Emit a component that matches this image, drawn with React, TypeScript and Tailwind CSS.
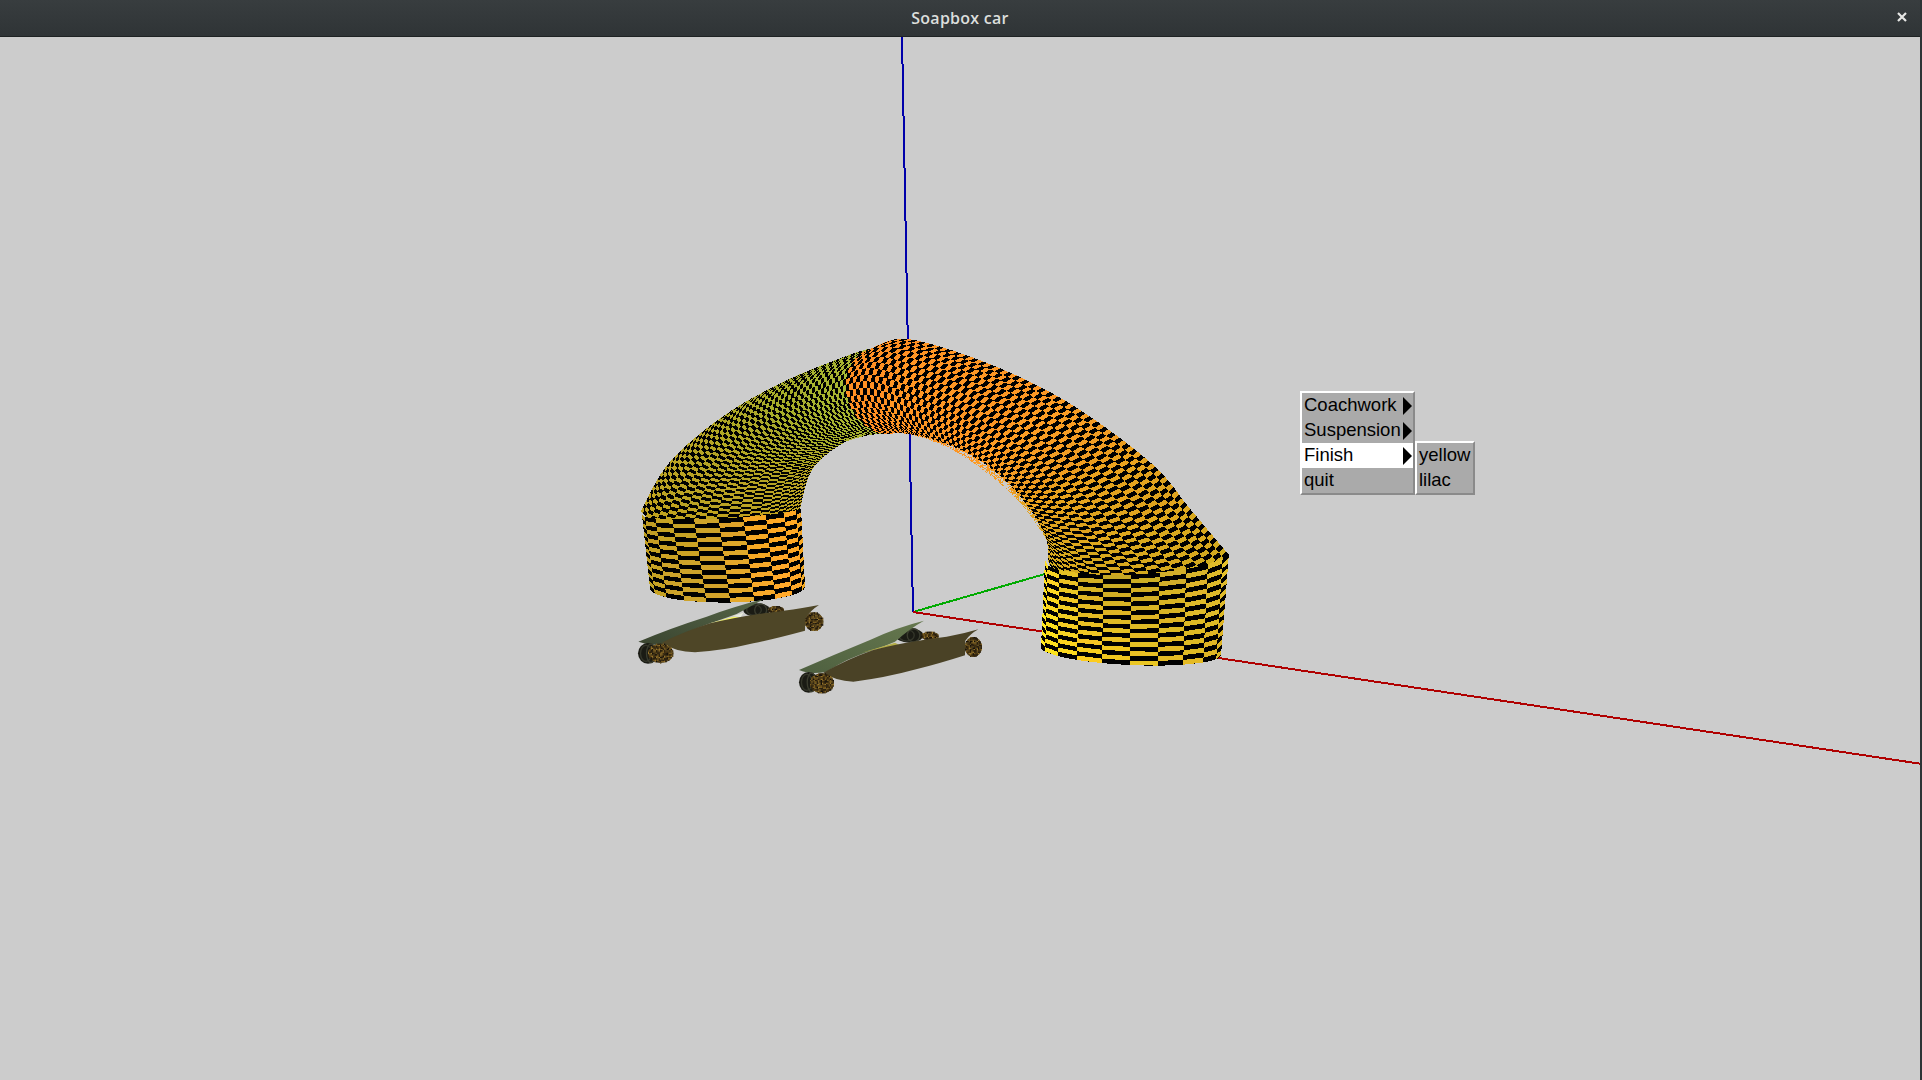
type Pt = [number, number];

// ---- small geometry helpers for the 3D scene ----
const lerp = (a: number, b: number, t: number) => a + (b - a) * t;
const mix = (a: Pt, b: Pt, t: number): Pt => [lerp(a[0], b[0], t), lerp(a[1], b[1], t)];

// dense catmull-rom polyline, resampled by arc length
const curve = (pts: Pt[]) => {
  const dense: Pt[] = [];
  for (let i = 0; i < pts.length - 1; i++) {
    const p0 = pts[Math.max(i - 1, 0)];
    const p1 = pts[i];
    const p2 = pts[i + 1];
    const p3 = pts[Math.min(i + 2, pts.length - 1)];
    for (let k = 0; k < 30; k++) {
      const t = k / 30;
      const f = (n: 0 | 1) =>
        0.5 *
        (2 * p1[n] +
          (p2[n] - p0[n]) * t +
          (2 * p0[n] - 5 * p1[n] + 4 * p2[n] - p3[n]) * t * t +
          (3 * p1[n] - p0[n] - 3 * p2[n] + p3[n]) * t * t * t);
      dense.push([f(0), f(1)]);
    }
  }
  dense.push(pts[pts.length - 1]);
  const len = [0];
  for (let i = 1; i < dense.length; i++) {
    len.push(len[i - 1] + Math.hypot(dense[i][0] - dense[i - 1][0], dense[i][1] - dense[i - 1][1]));
  }
  const total = len[len.length - 1];
  return (t: number): Pt => {
    const d = t * total;
    let i = 1;
    while (i < len.length - 1 && len[i] < d) i++;
    const s = (d - len[i - 1]) / (len[i] - len[i - 1] || 1);
    return mix(dense[i - 1], dense[i], s);
  };
};

const hex = (c: string) => [1, 3, 5].map((i) => parseInt(c.slice(i, i + 2), 16));
const rampRgb = (stops: string[], t: number) => {
  const p = Math.min(Math.max(t, 0), 0.9999) * (stops.length - 1);
  const i = Math.floor(p);
  const a = hex(stops[i]);
  const b = hex(stops[i + 1]);
  return a.map((v, n) => lerp(v, b[n], p - i));
};
const toColor = (c: number[]) => `rgb(${c.map((v) => Math.min(255, Math.round(v / 6) * 6)).join(",")})`;

const outline = (pts: Pt[]) => `M${pts.map((p) => `${p[0].toFixed(1)} ${p[1].toFixed(1)}`).join("L")}Z`;

type Cells = Record<string, string>;
const add = (cells: Cells, color: string, d: string) => {
  cells[color] = (cells[color] || "") + d;
};

// one half of the arch, u runs from start to end of the two edge curves
const tubeHalf = (
  outer: Pt[],
  inner: Pt[],
  nu: number,
  nv: number,
  bulge: (u: number) => Pt,
  stops: string[]
) => {
  const o = curve(outer);
  const n = curve(inner);
  const at = (u: number, v: number): Pt => {
    const s = lerp((1 - Math.cos(Math.PI * v)) / 2, v, 0.25);
    const p = mix(o(u), n(u), s);
    const b = bulge(u);
    const w = Math.sin(Math.PI * v);
    return [p[0] + b[0] * w, p[1] + b[1] * w];
  };
  const cells: Cells = {};
  const edge: Pt[] = [];
  for (let i = 0; i <= nu; i++) edge.push(o(i / nu));
  for (let j = 1; j < nv; j++) edge.push(at(1, j / nv));
  for (let i = nu; i >= 0; i--) edge.push(n(i / nu));
  for (let j = nv - 1; j > 0; j--) edge.push(at(0, j / nv));
  for (let i = 0; i < nu; i++) {
    for (let j = 0; j < nv; j++) {
      if ((i + j) % 2) continue;
      add(
        cells,
        toColor(rampRgb(stops, (i + 0.5) / nu)),
        outline([at(i / nu, j / nv), at((i + 1) / nu, j / nv), at((i + 1) / nu, (j + 1) / nv), at(i / nu, (j + 1) / nv)])
      );
    }
  }
  return { cells, base: outline(edge) };
};

type Rim = { l: Pt; r: Pt; b: Pt };
const cylinder = (top: Rim, bottom: Rim, cols: number, rows: number, stopsTop: string[], stopsBottom: string[]) => {
  const ring = (r: Rim, a: number): Pt => {
    const c = mix(r.l, r.r, 0.5);
    const k = -Math.cos(a);
    const s = Math.sin(a);
    return [c[0] + ((r.r[0] - r.l[0]) / 2) * k + r.b[0] * s, c[1] + ((r.r[1] - r.l[1]) / 2) * k + r.b[1] * s];
  };
  const at = (i: number, j: number) => mix(ring(top, (i / cols) * Math.PI), ring(bottom, (i / cols) * Math.PI), j / rows);
  const cells: Cells = {};
  const edge: Pt[] = [];
  for (let i = 0; i <= cols * 4; i++) edge.push(at(i / 4, 0));
  for (let i = cols * 4; i >= 0; i--) edge.push(at(i / 4, rows));
  for (let i = 0; i < cols; i++) {
    for (let j = 0; j < rows; j++) {
      if ((i + j) % 2) continue;
      const t = (i + 0.5) / cols;
      const a = rampRgb(stopsTop, t);
      const b = rampRgb(stopsBottom, t);
      add(cells, toColor(a.map((v, n) => lerp(v, b[n], j / rows))), outline([at(i, j), at(i + 1, j), at(i + 1, j + 1), at(i, j + 1)]));
    }
  }
  return { cells, base: outline(edge) };
};

const leftArch = tubeHalf(
  [[641, 511], [669, 463], [722, 417], [783, 382], [849, 355], [873, 348]],
  [[800, 509], [812, 470], [840, 445], [865, 436], [883, 434]],
  72,
  20,
  (u) => (u < 0.5 ? [lerp(-6, -22, u * 2), lerp(18, 12, u * 2)] : [lerp(-22, -32, u * 2 - 1), lerp(12, 0, u * 2 - 1)]),
  ["#c0a020", "#b4a424", "#a8ac2a", "#a8b834"]
);
const rightArch = tubeHalf(
  [[873, 348], [908, 339], [987, 363], [1069, 403], [1151, 463], [1191, 510], [1229, 555]],
  [[883, 434], [914, 435], [967, 453], [1012, 487], [1044, 533], [1048, 561]],
  94,
  20,
  (u) => (u < 0.5 ? [lerp(-32, -30, u * 2), lerp(0, 16, u * 2)] : [lerp(-30, -8, u * 2 - 1), lerp(16, 28, u * 2 - 1)]),
  ["#ff9224", "#ff9424", "#fa9a22", "#e2a220", "#d2ac20"]
);
const leftLeg = cylinder(
  { l: [642, 515], r: [801, 508], b: [-3, 7] },
  { l: [650, 589], r: [805, 586], b: [3, 15] },
  10,
  18,
  ["#b89a20", "#c09c20", "#c8a026", "#c8a426", "#d2a428", "#f2a626", "#ffa826", "#ffa826", "#f0a424"],
  ["#c0a020", "#c8a424", "#cca428", "#cca428", "#d8a428", "#f4a828", "#ffaa28", "#ffa828", "#e8a424"]
);
const rightLeg = cylinder(
  { l: [1045, 560], r: [1229, 553], b: [-6, 18] },
  { l: [1041, 647], r: [1221, 655], b: [-1, 14] },
  10,
  20,
  ["#ffe820", "#ffd820", "#ecc424", "#d4ae24", "#c8a824", "#ccaa24", "#d4b028", "#dcb82a", "#e0bc2a", "#e6c22a"],
  ["#fff020", "#ffe820", "#ffdc20", "#ffd020", "#f8cc20", "#eec424", "#e6bc24", "#e0b824", "#dcb424", "#d8b024"]
);

const Surface = ({ part }: { part: { cells: Cells; base: string } }) => (
  <g shapeRendering="crispEdges">
    <path d={part.base} fill="#000000" />
    {Object.entries(part.cells).map(([c, d]) => (
      <path key={c} d={d} fill={c} />
    ))}
  </g>
);

// speckled wheel tread, coordinates in the 3x car space
const speckle = (cx: number, cy: number, rx: number, ry: number, seed: number) => {
  const colors = ["#7a5c20", "#94742c", "#4e3a14", "#2a2010", "#5e4c22", "#14100a", "#3a2c12"];
  let s = seed;
  const rnd = () => {
    s = (s * 16807) % 2147483647;
    return s / 2147483647;
  };
  const out: { x: number; y: number; c: string }[] = [];
  for (let y = -ry; y < ry; y += 4) {
    for (let x = -rx; x < rx; x += 4) {
      if (((x + 2) * (x + 2)) / (rx * rx) + ((y + 2) * (y + 2)) / (ry * ry) > 1) continue;
      out.push({ x: cx + x, y: cy + y, c: colors[Math.floor(rnd() * colors.length)] });
    }
  }
  return out;
};

const Tread = ({ cx, cy, rx, ry, seed }: { cx: number; cy: number; rx: number; ry: number; seed: number }) => (
  <g>
    <ellipse cx={cx} cy={cy} rx={rx} ry={ry} fill="#3a2c12" />
    {speckle(cx, cy, rx, ry, seed).map((r, i) => (
      <rect key={i} x={r.x} y={r.y} width={4} height={4} fill={r.c} />
    ))}
  </g>
);

const Tyre = ({ cx, cy, rx, ry }: { cx: number; cy: number; rx: number; ry: number }) => (
  <g>
    <ellipse cx={cx} cy={cy} rx={rx} ry={ry} fill="#1a1b14" />
    <ellipse cx={cx - rx * 0.2} cy={cy} rx={rx * 0.55} ry={ry * 0.78} fill="none" stroke="#34362a" strokeWidth={4} />
    <ellipse cx={cx + rx * 0.3} cy={cy} rx={rx * 0.45} ry={ry * 0.9} fill="none" stroke="#3a3c2e" strokeWidth={4} />
  </g>
);

const Cars = () => (
  <g transform="translate(620 590) scale(0.33333)">
    {/* near car */}
    <Tyre cx={410} cy={60} rx={40} ry={20} />
    <Tread cx={468} cy={60} rx={24} ry={12} seed={71} />
    <path d="M55 155 Q 150 115 260 80 Q 340 50 432 27 Q 390 50 350 72 Q 300 90 270 100 Q 190 130 130 162 Q 90 168 55 155Z" fill="url(#wingNear)" />
    <polygon points="270,100 340,80 362,82 300,95" fill="#f4f46a" />
    <polygon points="340,78 370,68 362,82" fill="#e8ecdc" />
    <Tread cx={582} cy={95} rx={28} ry={28} seed={113} />
    <path d="M125 158 Q 200 122 270 100 Q 360 78 490 62 Q 550 55 597 45 Q 570 62 556 86 L555 122 Q 470 145 400 160 Q 310 182 225 187 Q 165 185 125 158Z" fill="#4e4627" />
    <Tyre cx={84} cy={190} rx={30} ry={31} />
    <Tread cx={122} cy={190} rx={38} ry={29} seed={37} />

    {/* far car */}
    <Tyre cx={868} cy={136} rx={42} ry={22} />
    <Tread cx={930} cy={138} rx={26} ry={13} seed={211} />
    <path d="M537 240 Q 640 195 750 150 Q 830 112 912 92 Q 870 115 825 155 Q 790 170 760 180 Q 680 205 620 245 Q 570 255 537 240Z" fill="url(#wingFar)" />
    <polygon points="725,188 825,158 838,165 760,180" fill="#b4ae48" />
    <Tread cx={1060} cy={171} rx={26} ry={30} seed={307} />
    <path d="M610 248 Q 680 208 760 180 Q 840 158 980 140 Q 1030 132 1075 118 Q 1050 132 1036 152 L1035 196 Q 960 220 900 235 Q 790 265 700 275 Q 645 272 610 248Z" fill="#4a4226" />
    <Tyre cx={566} cy={277} rx={29} ry={31} />
    <Tread cx={606} cy={280} rx={36} ry={30} seed={401} />
  </g>
);

const SoapboxScene = () => (
  <svg viewBox="0 37 1920 1043" className="block h-full w-full">
    <defs>
      <linearGradient id="wingNear" x1="0" y1="1" x2="1" y2="0">
        <stop offset="0" stopColor="#3a4530" />
        <stop offset="1" stopColor="#566648" />
      </linearGradient>
      <linearGradient id="wingFar" x1="0" y1="1" x2="1" y2="0">
        <stop offset="0" stopColor="#4e6040" />
        <stop offset="1" stopColor="#66784e" />
      </linearGradient>
    </defs>
    <g shapeRendering="crispEdges" strokeWidth={2}>
      <line x1={902} y1={37} x2={913} y2={612} stroke="#0000aa" />
      <line x1={913} y1={612} x2={1045} y2={574} stroke="#00aa00" />
      <line x1={913} y1={612} x2={1922} y2={764} stroke="#b00000" />
    </g>
    <Surface part={leftArch} />
    <Surface part={rightArch} />
    <Surface part={leftLeg} />
    <Surface part={rightLeg} />
    <Cars />
  </svg>
);

const Arrow = () => (
  <svg viewBox="0 0 9 18" className="ml-auto h-[18px] w-[9px] shrink-0">
    <polygon points="0,0 9,9 0,18" fill="#000000" />
  </svg>
);

const MenuRow = ({ label, active, more }: { label: string; active?: boolean; more?: boolean }) => (
  <div className={`flex h-[25px] items-center pl-[2px] pr-px text-black ${active ? "bg-white" : "bg-[#aaaaaa]"}`}>
    <span className="-translate-y-px">{label}</span>
    {more && <Arrow />}
  </div>
);

const menuBox = "border-2 border-t-white border-l-white border-r-[#8a8a8a] border-b-[#8a8a8a] bg-[#aaaaaa]";

const PopupMenu = () => (
  <div className="absolute left-[1300px] top-[354px] font-['Liberation_Sans',Arial,sans-serif] text-[18.5px] leading-[25px]">
    <div className={`w-[115px] ${menuBox}`}>
      <MenuRow label="Coachwork" more />
      <MenuRow label="Suspension" more />
      <MenuRow label="Finish" active more />
      <MenuRow label="quit" />
    </div>
    <div className={`absolute left-[115px] top-[50px] w-[60px] ${menuBox}`}>
      <MenuRow label="yellow" />
      <MenuRow label="lilac" />
    </div>
  </div>
);

export default function App() {
  return (
    <div className="flex h-screen w-screen overflow-hidden bg-[#2e3436]">
      <div className="flex w-[1920px] flex-col">
        <header className="relative flex h-[37px] shrink-0 items-center justify-center border-b border-[#1e2223] bg-gradient-to-b from-[#383d3f] to-[#2f3436] pb-px">
          <span className="font-['Open_Sans',sans-serif] text-[16px] font-semibold tracking-[0.25px] text-[#dcdedc]">Soapbox car</span>
          <svg viewBox="0 0 10 10" className="absolute right-[13px] top-[12px] h-[10px] w-[10px]">
            <path d="M1 1 L9 9 M9 1 L1 9" stroke="#e8e8e6" strokeWidth={2.2} />
          </svg>
        </header>
        <main className="relative flex-1 bg-[#cccccc]">
          <SoapboxScene />
          <PopupMenu />
        </main>
      </div>
    </div>
  );
}
